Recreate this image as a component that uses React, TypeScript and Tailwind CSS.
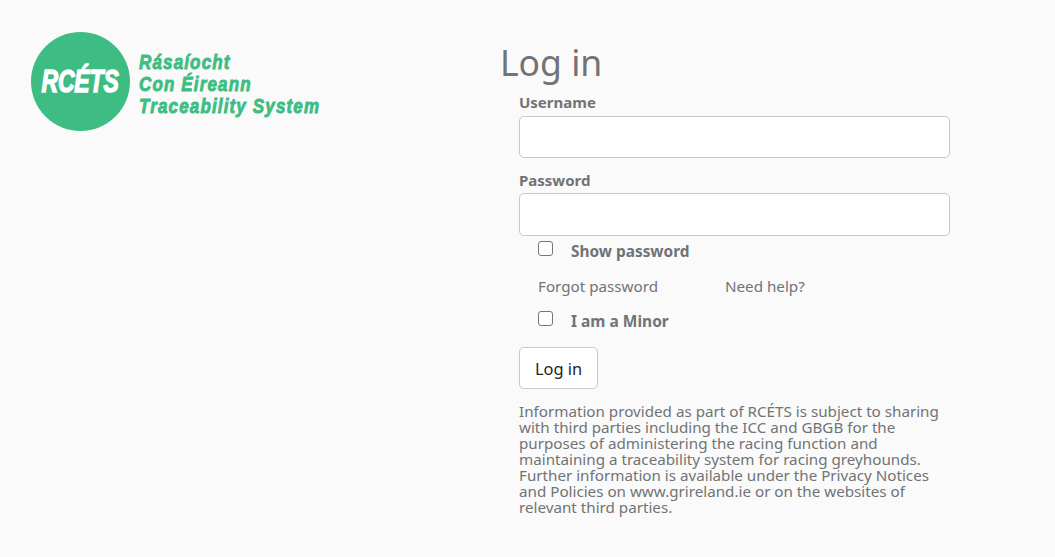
import { useState } from 'react';

function Logo() {
  return (
    <div className="flex items-start gap-[9px] text-[#3dbd83]">
      <div className="w-[99px] h-[99px] rounded-full bg-[#3dbd83] flex items-center justify-center shrink-0">
        <span className="text-white text-[31px] font-black italic tracking-[-0.2px] [font-family:'Liberation_Sans',sans-serif] [-webkit-text-stroke:1.4px_white] scale-x-[0.74] translate-y-[1px]">
          RCÉTS
        </span>
      </div>
      <div className="mt-[19px] origin-left scale-x-[0.85] whitespace-nowrap text-[20px] leading-[22px] font-bold italic [font-family:'Liberation_Sans',sans-serif] [-webkit-text-stroke:0.9px_#3dbd83] tracking-[1.35px]">
        <div>Rásaíocht</div>
        <div>Con Éireann</div>
        <div>Traceability System</div>
      </div>
    </div>
  );
}

export default function App() {
  const [showPassword, setShowPassword] = useState(false);

  return (
    <div className="min-h-[557px] bg-[#fafafa] text-[#717375] font-['Noto_Sans','Open_Sans',sans-serif] flex overflow-hidden">
      {/* Logo column */}
      <div className="w-[500px] shrink-0 pl-[31px] pt-[32px]">
        <Logo />
      </div>

      {/* Form column */}
      <div className="w-[450px] pt-[39px]">
        <h1 className="text-[35.5px] leading-[46px] font-normal">Log in</h1>

        <form className="pl-[19px]">
          <label className="block text-[15px] leading-[20px] font-bold mt-[7px] mb-[4px]">Username</label>
          <input type="text" className="block w-full h-[42px] bg-white border border-[#c8c8c8] rounded-[5px]" />

          <label className="block text-[15px] leading-[20px] font-bold mt-[12px] mb-[3px]">Password</label>
          <input
            type={showPassword ? 'text' : 'password'}
            className="block w-full h-[43px] bg-white border border-[#c8c8c8] rounded-[5px]"
          />

          <div className="pl-[19px]">
            <div className="flex items-start mt-[5px] h-[20px]">
              <input
                type="checkbox"
                checked={showPassword}
                onChange={(e) => setShowPassword(e.target.checked)}
                className="m-0 w-[15px] h-[15px] appearance-none bg-white border border-[#767676] rounded-[3px]"
              />
              <span className="ml-[18px] mt-[1px] text-[15.4px] leading-[20px] font-bold">Show password</span>
            </div>

            <div className="flex text-[15.2px] leading-[20px] mt-[15px]">
              <a className="w-[187px]">Forgot password</a>
              <a>Need help?</a>
            </div>

            <div className="flex items-start mt-[15px] h-[20px]">
              <input
                type="checkbox"
                className="m-0 w-[15px] h-[15px] appearance-none bg-white border border-[#767676] rounded-[3px]"
              />
              <span className="ml-[18px] text-[15.5px] leading-[20px] font-bold">I am a Minor</span>
            </div>
          </div>

          <button
            type="button"
            className="block mt-[16px] w-[79px] h-[42px] pt-[2px] bg-white border border-[#c8c8c8] rounded-[5px] text-[#212529] text-[16.4px]"
          >
            Log in
          </button>

          <p className="mt-[14px] text-[15.2px] leading-[16px] w-[431px]">
            Information provided as part of RCÉTS is subject to sharing with third parties including the ICC and GBGB for the
            purposes of administering the racing function and maintaining a traceability system for racing greyhounds.
            Further information is available under the Privacy Notices and Policies on www.grireland.ie or on the websites of
            relevant third parties.
          </p>
        </form>
      </div>
    </div>
  );
}
